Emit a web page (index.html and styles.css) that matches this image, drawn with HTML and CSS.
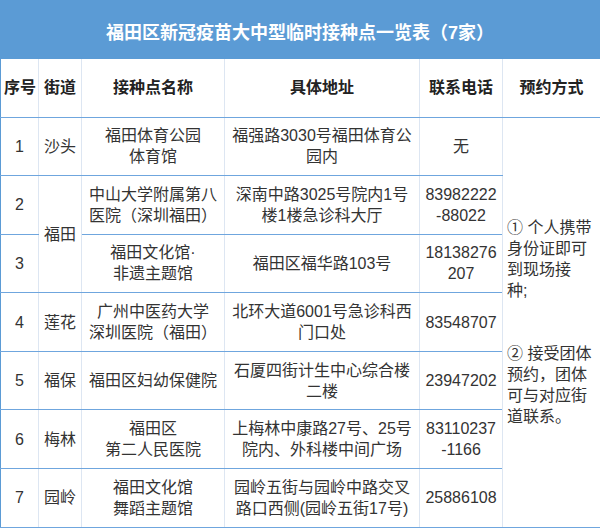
FILE: index.html
```html
<!DOCTYPE html>
<html lang="zh-CN">
<head>
<meta charset="utf-8">
<title>福田区新冠疫苗大中型临时接种点一览表</title>
<link rel="stylesheet" href="styles.css">
</head>
<body>
<div class="sheet">
  <div class="title">福田区新冠疫苗大中型临时接种点一览表（7家）</div>
  <table class="grid">
    <colgroup>
      <col class="c-no">
      <col class="c-street">
      <col class="c-name">
      <col class="c-addr">
      <col class="c-tel">
      <col class="c-way">
    </colgroup>
    <thead>
      <tr class="head-row">
        <th>序号</th>
        <th>街道</th>
        <th>接种点名称</th>
        <th>具体地址</th>
        <th>联系电话</th>
        <th>预约方式</th>
      </tr>
    </thead>
    <tbody>
      <tr class="row">
        <td>1</td>
        <td>沙头</td>
        <td>福田体育公园<br>体育馆</td>
        <td>福强路3030号福田体育公<br>园内</td>
        <td>无</td>
        <td class="way" rowspan="7">① 个人携带<br>身份证即可<br>到现场接<br>种;<br><br><br>② 接受团体<br>预约，团体<br>可与对应街<br>道联系。</td>
      </tr>
      <tr class="row">
        <td>2</td>
        <td rowspan="2">福田</td>
        <td>中山大学附属第八<br>医院（深圳福田）</td>
        <td>深南中路3025号院内1号<br>楼1楼急诊科大厅</td>
        <td>83982222<br>-88022</td>
      </tr>
      <tr class="row">
        <td>3</td>
        <td>福田文化馆·<br>非遗主题馆</td>
        <td>福田区福华路103号</td>
        <td>18138276<br>207</td>
      </tr>
      <tr class="row">
        <td>4</td>
        <td>莲花</td>
        <td>广州中医药大学<br>深圳医院（福田）</td>
        <td>北环大道6001号急诊科西<br>门口处</td>
        <td>83548707</td>
      </tr>
      <tr class="row">
        <td>5</td>
        <td>福保</td>
        <td>福田区妇幼保健院</td>
        <td>石厦四街计生中心综合楼<br>二楼</td>
        <td>23947202</td>
      </tr>
      <tr class="row">
        <td>6</td>
        <td>梅林</td>
        <td>福田区<br>第二人民医院</td>
        <td>上梅林中康路27号、25号<br>院内、外科楼中间广场</td>
        <td>83110237<br>-1166</td>
      </tr>
      <tr class="row">
        <td>7</td>
        <td>园岭</td>
        <td>福田文化馆<br>舞蹈主题馆</td>
        <td>园岭五街与园岭中路交叉<br>路口西侧(园岭五街17号)</td>
        <td>25886108</td>
      </tr>
    </tbody>
  </table>
</div>
</body>
</html>
```

FILE: styles.css
```css
html, body {
  margin: 0;
  padding: 0;
  background: #ffffff;
}

body {
  font-family: "Liberation Sans", "Noto Sans CJK SC", sans-serif;
  color: #333333;
}

.sheet {
  width: 600px;
}

.title {
  height: 59px;
  box-sizing: border-box;
  padding-top: 2px;
  display: flex;
  align-items: center;
  justify-content: center;
  background: #5b9bd5;
  color: #ffffff;
  font-size: 18px;
  font-weight: bold;
}

.grid {
  width: 600px;
  table-layout: fixed;
  border-collapse: collapse;
  border-left: 1px solid #5b9bd5;
  border-right: 1px solid #5b9bd5;
  border-bottom: 1px solid #5b9bd5;
}

.c-no { width: 38px; }
.c-street { width: 43px; }
.c-name { width: 143px; }
.c-addr { width: 195px; }
.c-tel { width: 83px; }
.c-way { width: 98px; }

.grid th,
.grid td {
  padding: 0 3px;
  text-align: center;
  vertical-align: middle;
  font-size: 16px;
  line-height: 21px;
  border-top: 1px solid #6fa6de;
  border-bottom: 1px solid #6fa6de;
  border-left: 1px solid #dde6f2;
  border-right: 1px solid #dde6f2;
  white-space: nowrap;
}

.grid th {
  font-weight: bold;
  color: #222222;
  border-top: none;
}

.head-row {
  height: 58px;
}

.row {
  height: 58.6px;
}

.grid td.way {
  text-align: left;
  padding: 0 2px 0 4px;
  border-right: 1px solid #5b9bd5;
}

.grid th:first-child,
.grid td:first-child {
  border-left: 1px solid #5b9bd5;
}

.grid th:last-child {
  border-right: 1px solid #5b9bd5;
}
```
